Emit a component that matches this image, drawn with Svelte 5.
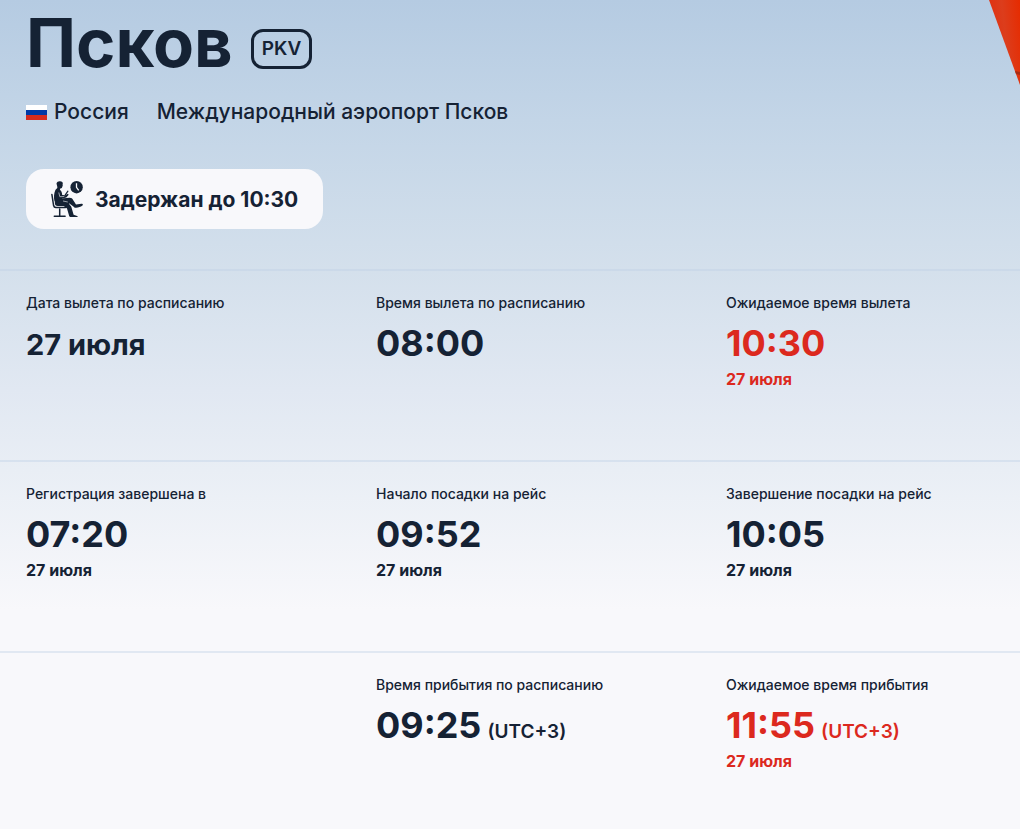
<script lang="ts">
  type Cell = {
    label: string;
    value: string;
    zone?: string;
    note?: string;
    alert?: boolean;
    small?: boolean;
  };

  const rows: (Cell | null)[][] = [
    [
      { label: "Дата вылета по расписанию", value: "27 июля", small: true },
      { label: "Время вылета по расписанию", value: "08:00" },
      { label: "Ожидаемое время вылета", value: "10:30", note: "27 июля", alert: true },
    ],
    [
      { label: "Регистрация завершена в", value: "07:20", note: "27 июля" },
      { label: "Начало посадки на рейс", value: "09:52", note: "27 июля" },
      { label: "Завершение посадки на рейс", value: "10:05", note: "27 июля" },
    ],
    [
      null,
      { label: "Время прибытия по расписанию", value: "09:25", zone: "(UTC+3)" },
      {
        label: "Ожидаемое время прибытия",
        value: "11:55",
        zone: "(UTC+3)",
        note: "27 июля",
        alert: true,
      },
    ],
  ];
</script>

<main class="flight">
  <svg class="tail" viewBox="0 0 31 85" aria-hidden="true">
    <defs>
      <linearGradient id="tail-fill" x1="0" y1="0.3" x2="1" y2="0">
        <stop offset="0" stop-color="#e03010" />
        <stop offset="0.45" stop-color="#dc3d1c" />
        <stop offset="1" stop-color="#e62b00" />
      </linearGradient>
    </defs>
    <path d="M0 0H31V85Z" fill="url(#tail-fill)" />
    <path d="M26 71l5 1v3l-4-1z" fill="#a82c14" />
  </svg>

  <header class="head">
    <div class="title">
      <h1>Псков</h1>
      <span class="code">PKV</span>
    </div>

    <div class="place">
      <span class="country">
        <svg class="flag" viewBox="0 0 21 15" aria-hidden="true">
          <path fill="#fff" d="M0 0h21v5H0z" />
          <path fill="#0039a6" d="M0 5h21v5H0z" />
          <path fill="#d52b1e" d="M0 10h21v5H0z" />
        </svg>
        Россия
      </span>
      <span>Международный аэропорт Псков</span>
    </div>

    <div class="status">
      <svg class="waiting" viewBox="0 0 32 36" aria-hidden="true">
        <g fill="currentColor">
          <!-- голова и корпус -->
          <path d="M5.500 2.500C6 .7 7.500 0 9 .2c2 0 3 1 2.800 2.400l-.2 1.200.2 1.400-.6.4c0 1.500-.7 2-2 1.900l-.3 1.200c1.500 1 2.100 2.800 2.300 5.400l3.200.2 2.400-1.600.9 1-2.400 2.800-4 .9v1.600l-7.800 1.500C2.600 16.500 2.900 12 4.300 9.200c.6-1 1.400-1.400 2-2.200.3-1.200-.5-2.800-.8-4.500z" />
          <!-- ноги -->
          <path d="M4.300 19.200l8-2 6.400-.5c1.700 0 2.700.8 3.400 2.200l2.900 4.700 5.500-.8c1.200 0 1.800 1 1 1.600-2 1.300-4 2.200-6.400 2.400-1.300.1-2-.4-2.700-1.200l-4-3.200-.6 0 2.500 3.400 2.300 8 3.500 1.200c.8.3.7 1.200 0 1.200h-7l-.9-1.200-2.200-7.600-3.300-2.500-6 .1c-2.300 0-3.300-1.500-2.700-4.700z" />
          <circle cx="25.600" cy="6.200" r="6.200" />
        </g>
        <g fill="none" stroke="currentColor" stroke-linecap="round">
          <path stroke-width="1.500" d="M.9 13.500l1.700 11q.4 2 2.300 2h9.600" />
          <path stroke-width="1.200" d="M14.300 13.800l2.600-3.600" />
          <path stroke-width="1.500" d="M8.700 28v6.500M3.300 35.200h10.800" />
        </g>
        <g fill="none" stroke="#f8f8fb">
          <path stroke-width="1.300" d="M25.500 2.300v4.100l2.200 3" />
          <path stroke-width="0.600" d="M7.800 11.500l1 4.200 4.500-.2M12 20l4.800 1" />
        </g>
      </svg>
      Задержан до 10:30
    </div>
  </header>

  {#each rows as row}
    <section class="row">
      {#each row as cell}
        <div class="cell" class:alert={cell?.alert}>
          {#if cell}
            <p class="label">{cell.label}</p>
            <p class="value" class:small={cell.small}>
              <span>{cell.value}</span>
              {#if cell.zone}<span class="zone">{cell.zone}</span>{/if}
            </p>
            {#if cell.note}
              <p class="note">{cell.note}</p>
            {/if}
          {/if}
        </div>
      {/each}
    </section>
  {/each}
</main>

<style>
  :global(body) {
    margin: 0;
    background: #f8f8fb;
  }

  .flight {
    position: relative;
    min-height: 100vh;
    box-sizing: border-box;
    color: #152234;
    font-family: Inter, "Noto Sans", sans-serif;
    background: linear-gradient(
      #b5cbe2 0,
      #c3d5e7 120px,
      #d4e0ec 270px,
      #e1e8f2 390px,
      #e9eef5 470px,
      #f8f8fb 610px
    );
  }

  .tail {
    position: absolute;
    top: 0;
    right: 0;
    width: 31px;
    height: 85px;
  }

  h1,
  p {
    margin: 0;
  }

  .head {
    padding: 7px 26px 40px;
  }

  .title {
    display: flex;
    align-items: center;
    gap: 18px;
  }

  h1 {
    font-size: 67px;
    line-height: 72px;
    font-weight: 700;
  }

  .code {
    box-sizing: border-box;
    height: 40px;
    margin-top: 12px;
    padding: 0 8px;
    border: 3px solid currentColor;
    border-radius: 12px;
    font-size: 19px;
    line-height: 34px;
    font-weight: 600;
  }

  .place {
    display: flex;
    gap: 28px;
    margin-top: 19px;
    font-size: 21px;
    line-height: 28px;
    font-weight: 500;
  }

  .country {
    display: flex;
    align-items: center;
    gap: 7px;
  }

  .flag {
    width: 21px;
    height: 15px;
  }

  .status {
    display: inline-flex;
    align-items: center;
    gap: 12px;
    height: 60px;
    margin-top: 43px;
    padding: 0 25px;
    border-radius: 18px;
    background: #f8f8fb;
    font-size: 21px;
    font-weight: 700;
    vertical-align: top;
  }

  .waiting {
    width: 32px;
    height: 36px;
  }

  .row {
    display: grid;
    grid-template-columns: repeat(3, minmax(0, 1fr));
    column-gap: 56px;
    min-height: 96px;
    padding: 22px 0 71px 26px;
    border-top: 2px solid rgba(190, 208, 230, 0.4);
  }

  .label {
    font-size: 14px;
    line-height: 20px;
    font-weight: 500;
  }

  .value {
    display: flex;
    align-items: baseline;
    gap: 6px;
    margin-top: 8px;
    font-size: 36px;
    line-height: 44px;
    font-weight: 700;
    white-space: nowrap;
  }

  .value.small {
    font-size: 29px;
    line-height: 48px;
  }

  .zone {
    font-size: 19px;
    line-height: 20px;
    font-weight: 600;
  }

  .note {
    margin-top: 4px;
    font-size: 16px;
    line-height: 20px;
    font-weight: 700;
  }

  .alert .value,
  .alert .note {
    color: #dc291e;
  }
</style>
